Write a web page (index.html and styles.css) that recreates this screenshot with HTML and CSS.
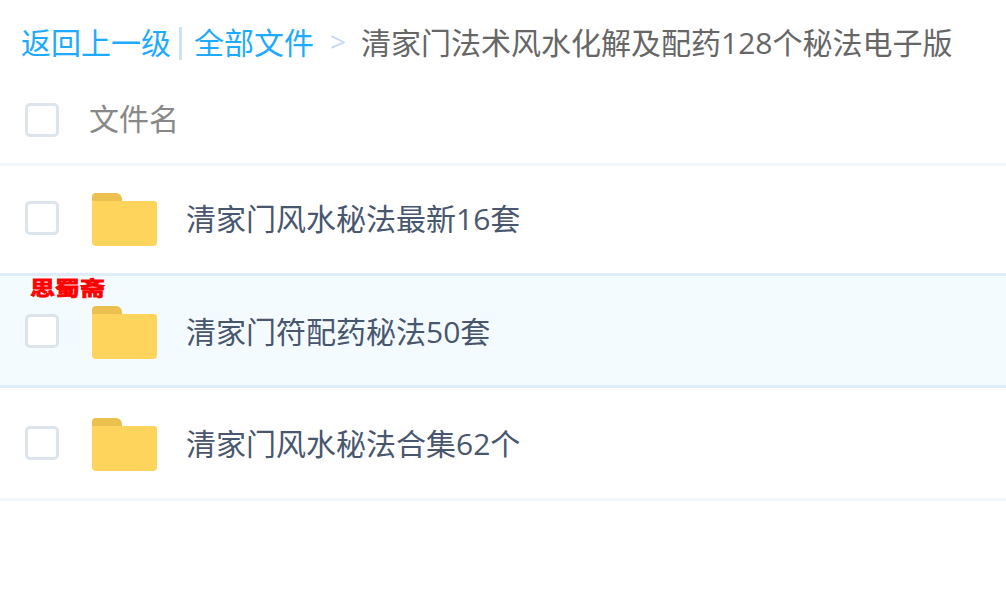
FILE: index.html
```html
<!DOCTYPE html>
<html lang="zh-CN">
<head>
    <meta charset="UTF-8">
    <meta name="viewport" content="width=device-width, initial-scale=1.0">
    <title>全部文件</title>
    <link rel="stylesheet" href="styles.css">
</head>
<body>
    <div class="crumbs">
        <a class="crumb-link">返回上一级</a>
        <span class="crumb-bar"></span>
        <a class="crumb-link">全部文件</a>
        <span class="crumb-sep">&gt;</span>
        <span class="crumb-current">清家门法术风水化解及配药128个秘法电子版</span>
    </div>

    <div class="list-head">
        <span class="check"></span>
        <span class="head-name">文件名</span>
    </div>

    <div class="file-row">
        <span class="check"></span>
        <svg class="folder" viewBox="0 0 65 53"><path d="M0 4a4 4 0 0 1 4-4h20a6 6 0 0 1 6 6v2H0z" fill="#ecc04f"/><path d="M0 8h62a3 3 0 0 1 3 3v38a4 4 0 0 1-4 4H4a4 4 0 0 1-4-4z" fill="#ffd45c"/></svg>
        <span class="file-name">清家门风水秘法最新16套</span>
    </div>
    <div class="file-row active">
        <span class="stamp">思蜀斋</span>
        <span class="check"></span>
        <svg class="folder" viewBox="0 0 65 53"><path d="M0 4a4 4 0 0 1 4-4h20a6 6 0 0 1 6 6v2H0z" fill="#ecc04f"/><path d="M0 8h62a3 3 0 0 1 3 3v38a4 4 0 0 1-4 4H4a4 4 0 0 1-4-4z" fill="#ffd45c"/></svg>
        <span class="file-name">清家门符配药秘法50套</span>
    </div>
    <div class="file-row">
        <span class="check"></span>
        <svg class="folder" viewBox="0 0 65 53"><path d="M0 4a4 4 0 0 1 4-4h20a6 6 0 0 1 6 6v2H0z" fill="#ecc04f"/><path d="M0 8h62a3 3 0 0 1 3 3v38a4 4 0 0 1-4 4H4a4 4 0 0 1-4-4z" fill="#ffd45c"/></svg>
        <span class="file-name">清家门风水秘法合集62个</span>
    </div>
</body>
</html>
```

FILE: styles.css
```css
* {
    margin: 0;
    padding: 0;
    box-sizing: border-box;
}

body {
    background: #fff;
    font-family: "Open Sans", "Noto Sans CJK SC", sans-serif;
    font-size: 30px;
    overflow: hidden;
}

.crumbs {
    height: 84px;
    padding: 0 0 2px 21px;
    display: flex;
    align-items: center;
    white-space: nowrap;
}

.crumb-link {
    color: #1eabff;
}

.crumb-bar {
    width: 3px;
    height: 33px;
    margin: 4px 12px 0 8px;
    background: #cbe3f7;
}

.crumb-sep {
    margin: 0 15px 0 16px;
    color: #c5d8f2;
    font-size: 28px;
}

.crumb-current {
    color: #666;
}

.list-head {
    height: 82px;
    padding: 0 0 8px 25px;
    display: flex;
    align-items: center;
    border-bottom: 3px solid #f3f6fb;
}

.check {
    width: 34px;
    height: 34px;
    flex: none;
    border: 3px solid #dde4ec;
    border-radius: 5px;
    background: #fff;
}

.head-name {
    margin: 0 0 6px 30px;
    color: #888;
}

.file-row {
    position: relative;
    height: 113px;
    padding: 0 0 0 25px;
    display: flex;
    align-items: center;
    border-bottom: 3px solid #f3f6fb;
}

.list-head + .file-row {
    height: 110px;
    padding: 0 0 3px 25px;
}

.file-row.active {
    height: 115px;
    margin-top: -3px;
    padding-top: 1px;
    background: #f4fbff;
    border-top: 3px solid #dfedfb;
    border-bottom-color: #dfedfb;
}

.folder {
    width: 65px;
    height: 53px;
    margin: 2px 0 0 33px;
    flex: none;
}

.file-name {
    margin: 0 0 2px 29px;
    color: #48566e;
}

.stamp {
    position: absolute;
    left: 30px;
    top: 2px;
    color: #f00;
    font-size: 25px;
    line-height: 26px;
    font-weight: 700;
    -webkit-text-stroke: 1px #f00;
    transform: scaleY(0.8);
    transform-origin: left top;
}
```
